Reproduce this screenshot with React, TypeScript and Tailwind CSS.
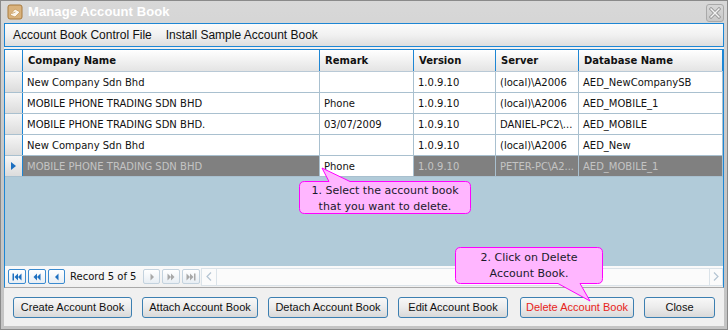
import React from 'react';

const rows = [
  { company: 'New Company Sdn Bhd', remark: '', version: '1.0.9.10', server: '(local)\\A2006', db: 'AED_NewCompanySB' },
  { company: 'MOBILE PHONE TRADING SDN BHD', remark: 'Phone', version: '1.0.9.10', server: '(local)\\A2006', db: 'AED_MOBILE_1' },
  { company: 'MOBILE PHONE TRADING SDN BHD.', remark: '03/07/2009', version: '1.0.9.10', server: 'DANIEL-PC2\\...', db: 'AED_MOBILE' },
  { company: 'New Company Sdn Bhd', remark: '', version: '1.0.9.10', server: '(local)\\A2006', db: 'AED_New' },
  { company: 'MOBILE PHONE TRADING SDN BHD', remark: 'Phone', version: '1.0.9.10', server: 'PETER-PC\\A2...', db: 'AED_MOBILE_1' },
];

const tahoma = { fontFamily: '"DejaVu Sans", Verdana, sans-serif' };
const segoe = { fontFamily: '"Liberation Sans", Arial, sans-serif' };

const NavIcon = ({ kind, disabled }: { kind: 'first' | 'prevPage' | 'prev' | 'next' | 'nextPage' | 'last'; disabled?: boolean }) => {
  const c = disabled ? '#a8a8a8' : '#1c6fc0';
  return (
    <svg width="10" height="8" viewBox="0 0 10 8">
      {kind === 'first' && (
        <g fill={c}>
          <rect x="0.5" y="0.5" width="1.5" height="7" />
          <polygon points="6,0.5 2.5,4 6,7.5" />
          <polygon points="9.5,0.5 6,4 9.5,7.5" />
        </g>
      )}
      {kind === 'prevPage' && (
        <g fill={c}>
          <polygon points="5,0.5 1.5,4 5,7.5" />
          <polygon points="8.5,0.5 5,4 8.5,7.5" />
        </g>
      )}
      {kind === 'prev' && <polygon fill={c} points="6.5,0.5 3,4 6.5,7.5" />}
      {kind === 'next' && <polygon fill={c} points="3.5,0.5 7,4 3.5,7.5" />}
      {kind === 'nextPage' && (
        <g fill={c}>
          <polygon points="1.5,0.5 5,4 1.5,7.5" />
          <polygon points="5,0.5 8.5,4 5,7.5" />
        </g>
      )}
      {kind === 'last' && (
        <g fill={c}>
          <polygon points="0.5,0.5 4,4 0.5,7.5" />
          <polygon points="4,0.5 7.5,4 4,7.5" />
          <rect x="8" y="0.5" width="1.5" height="7" />
        </g>
      )}
    </svg>
  );
};

const NavButton = ({ kind, disabled, w = 'w-[18px]' }: { kind: any; disabled?: boolean; w?: string }) => (
  <div
    className={`${w} h-[15px] flex items-center justify-center rounded-[2px] border bg-gradient-to-b from-white to-[#e8eef4] ${
      disabled ? 'border-[#c3d2de]' : 'border-[#3a8bd0]'
    }`}
  >
    <NavIcon kind={kind} disabled={disabled} />
  </div>
);

const Button = ({ label, w, danger, className = '' }: { label: string; w: string; danger?: boolean; className?: string }) => (
  <div
    className={`${w} h-[21px] flex items-center justify-center rounded-[3px] border border-[#3c7fb1] bg-gradient-to-b from-[#f8f8f8] via-[#ebebeb] to-[#d9d9d9] text-[11px] ${
      danger ? 'text-[#e8241a]' : 'text-[#111]'
    } ${className}`}
    style={segoe}
  >
    {label}
  </div>
);

export default function App() {
  return (
    <div className="relative w-[728px] h-[330px] flex flex-col border border-[#8a8a8a] bg-gradient-to-b from-[#d8d8d8] via-[#c6c6c6] to-[#c4c4c4] overflow-hidden">
      {/* title bar */}
      <div className="h-[22px] flex items-center pl-[6px] pr-[3px] shrink-0">
        <svg width="16" height="16" viewBox="0 0 16 16">
          <rect x="1" y="1" width="14" height="14" rx="2" fill="#d9b27c" stroke="#a77a3e" />
          <path d="M3 11 L8 5 L13 8 L8 13 Z" fill="#fbf6ec" stroke="#c89a5c" strokeWidth="0.8" />
          <path d="M5 9.5 L8.5 8" stroke="#c89a5c" strokeWidth="0.8" />
        </svg>
        <span className="ml-[5px] text-white font-bold text-[13px] tracking-[0.1px]" style={segoe}>
          Manage Account Book
        </span>
        <div className="ml-auto mt-[1px] w-[18px] h-[18px] rounded-[3px] border border-[#a9a9a9] bg-gradient-to-b from-[#d8d8d8] to-[#c8c8c8] flex items-center justify-center">
          <svg width="12" height="12" viewBox="0 0 12 12">
            <path d="M2 2 L10 10 M10 2 L2 10" stroke="#9a9a9a" strokeWidth="3.2" strokeLinecap="square" />
            <path d="M2 2 L10 10 M10 2 L2 10" stroke="#f4f4f4" strokeWidth="1.4" strokeLinecap="square" />
          </svg>
        </div>
      </div>

      {/* content */}
      <div className="flex-1 mx-[3px] mb-[3px] bg-[#f0f0f0] flex flex-col min-h-0">
        {/* menu */}
        <div
          className="h-[24px] shrink-0 flex items-center gap-[14px] pl-[8px] border border-[#1d86d4] bg-gradient-to-b from-[#fbfbfb] via-[#f1f1f1] to-[#dedede] text-[12px] text-[#111]"
          style={segoe}
        >
          <span>Account Book Control File</span>
          <span>Install Sample Account Book</span>
        </div>

        {/* grid */}
        <div className="mt-[2px] flex-1 flex flex-col min-h-0 border-t border-x border-[#1d86d4] border-b-[#a8a8a8] border-b text-[10px] text-[#111]" style={tahoma}>
          {/* header */}
          <div className="h-[22px] shrink-0 flex font-bold bg-gradient-to-b from-white to-[#e4e4e4] border-b border-[#b9c9d6]">
            <div className="w-[18px] border-r border-[#1d86d4]" />
            <div className="w-[297px] border-r border-[#1d86d4] flex items-center pl-[5px]">Company Name</div>
            <div className="w-[94px] border-r border-[#1d86d4] flex items-center pl-[5px]">Remark</div>
            <div className="w-[82px] border-r border-[#1d86d4] flex items-center pl-[5px]">Version</div>
            <div className="w-[83px] border-r border-[#1d86d4] flex items-center pl-[5px]">Server</div>
            <div className="flex-1 flex items-center pl-[5px] border-r border-[#1d86d4]">Database Name</div>
          </div>

          {rows.map((r, i) => {
            const sel = i === rows.length - 1;
            const cell = `h-full flex items-center pl-[4px] border-r border-[#a9c0cf] whitespace-nowrap overflow-hidden ${
              sel ? 'bg-[#808080] text-[#c4c4c4]' : 'bg-white'
            }`;
            return (
              <div key={i} className="h-[21px] shrink-0 flex border-b border-[#a9c0cf]">
                <div className="w-[18px] h-full border-r border-[#1d86d4] bg-gradient-to-b from-[#f6f6f6] to-[#dcdcdc] flex items-center pl-[6px]">
                  {sel && (
                    <svg width="5" height="8" viewBox="0 0 5 8">
                      <polygon points="0,0 5,4 0,8" fill="#1c6fc0" />
                    </svg>
                  )}
                </div>
                <div className={`w-[297px] ${cell}`}>{r.company}</div>
                <div className={`w-[94px] ${cell} ${sel ? '!bg-white !text-[#111]' : ''}`}>{r.remark}</div>
                <div className={`w-[82px] ${cell}`}>{r.version}</div>
                <div className={`w-[83px] ${cell}`}>{r.server}</div>
                <div className={`flex-1 ${cell}`}>{r.db}</div>
              </div>
            );
          })}

          <div className="flex-1 bg-[#b1cbd9]" />

          {/* navigator */}
          <div className="h-[21px] shrink-0 flex items-center pl-[3px] bg-gradient-to-b from-[#fafafa] to-[#f0f0f0]">
            <div className="flex gap-[2px]">
              <NavButton kind="first" />
              <NavButton kind="prevPage" />
              <NavButton kind="prev" w="w-[17px]" />
            </div>
            <span className="ml-[5px] w-[70px] text-[10px] text-[#111]">Record 5 of 5</span>
            <div className="ml-[3px] flex gap-[2px]">
              <NavButton kind="next" w="w-[17px]" disabled />
              <NavButton kind="nextPage" disabled />
              <NavButton kind="last" disabled />
            </div>
            <div className="ml-[1px] flex-1 h-[18px] flex items-center border border-[#dbe3e9] bg-[#fbfbfb]">
              <div className="w-[15px] h-full border-r border-[#dbe3e9] flex items-center justify-center">
                <svg width="6" height="9" viewBox="0 0 6 9">
                  <path d="M5 0.5 L1 4.5 L5 8.5" fill="none" stroke="#b4c4d2" strokeWidth="1.2" />
                </svg>
              </div>
              <div className="flex-1" />
              <div className="w-[13px] h-full border-l border-[#dbe3e9] flex items-center justify-center">
                <svg width="6" height="9" viewBox="0 0 6 9">
                  <path d="M1 0.5 L5 4.5 L1 8.5" fill="none" stroke="#b4c4d2" strokeWidth="1.2" />
                </svg>
              </div>
            </div>
          </div>
        </div>

        {/* buttons */}
        <div className="h-[38px] shrink-0 flex items-start pt-[9px] pl-[9px] gap-[10px]">
          <Button label="Create Account Book" w="w-[119px]" />
          <Button label="Attach Account Book" w="w-[116px]" />
          <Button label="Detach Account Book" w="w-[120px]" />
          <Button label="Edit Account Book" w="w-[110px]" />
          <Button label="Delete Account Book" w="w-[114px]" danger className="ml-[2px]" />
          <Button label="Close" w="w-[71px]" />
        </div>
      </div>

      {/* callouts */}
      <svg className="absolute left-[-1px] top-[-1px] pointer-events-none" width="728" height="330" viewBox="0 0 728 330">
        <path
          d="M304.5 181.5 H329 L322 168 L350 181.5 H465.5 Q470.5 181.5 470.5 186.5 V208.5 Q470.5 213.5 465.5 213.5 H304.5 Q299.5 213.5 299.5 208.5 V186.5 Q299.5 181.5 304.5 181.5 Z"
          fill="#ffb6ff"
          stroke="#ff00ff"
        />
        <path
          d="M460.5 247.5 H597.5 Q602.5 247.5 602.5 252.5 V278.5 Q602.5 283.5 597.5 283.5 H580 L590 301 L558 283.5 H460.5 Q455.5 283.5 455.5 278.5 V252.5 Q455.5 247.5 460.5 247.5 Z"
          fill="#ffb6ff"
          stroke="#ff00ff"
        />
      </svg>
      <div
        className="absolute left-[298px] top-[181px] w-[172px] h-[32px] flex flex-col items-center justify-center text-[11px] leading-[16px] text-[#1a1a2a] pt-[2px]"
        style={tahoma}
      >
        <span>1. Select the account book</span>
        <span>that you want to delete.</span>
      </div>
      <div
        className="absolute left-[454px] top-[247px] w-[148px] h-[36px] flex flex-col items-center justify-center text-[11px] leading-[16px] text-[#1a1a2a]"
        style={tahoma}
      >
        <span>2. Click on Delete</span>
        <span>Account Book.</span>
      </div>
    </div>
  );
}
